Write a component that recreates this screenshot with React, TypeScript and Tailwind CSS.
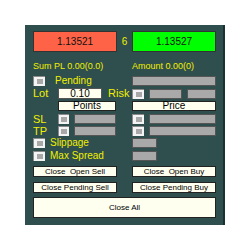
import React from 'react'

const font = "font-['Liberation_Sans',Arial,sans-serif]"

function Check({ w = 'w-[12px]' }: { w?: string }) {
  return (
    <div className={`${w} h-[10px] shrink-0 bg-[#f4f4f4] border-t border-l border-[#8a8a8a] flex items-center justify-center`}>
      <div className="w-[6px] h-[5px] bg-[#a8a8a8]" />
    </div>
  )
}

function Field({ w }: { w: string }) {
  return <div className={`${w} h-[10px] shrink-0 bg-[#a9a9a9] border border-[#555555]`} />
}

function Btn({ label, w, h = 'h-[11px]', size = 'text-[8px]' }: { label: string; w: string; h?: string; size?: string }) {
  return (
    <div className={`${w} ${h} ${size} shrink-0 bg-[#fffff0] border border-[#222222] flex items-center justify-center whitespace-pre text-black leading-none`}>
      {label}
    </div>
  )
}

export default function App() {
  return (
    <div className={`w-[250px] h-[250px] bg-white pt-[25px] pl-[25px] ${font}`}>
      <div className="w-[200px] h-[200px] bg-[#2f4f4f] border-r-2 border-[#1b3030] pl-[8px] pt-[6px] text-[#f0f000]">
        {/* quotes */}
        <div className="flex items-center h-[21px]">
          <div className="w-[84px] h-[21px] bg-[#ff6347] border border-[#333333] flex items-center justify-center text-[10px] text-[#111111]">
            1.13521
          </div>
          <div className="w-[15px] text-center text-[10px]">6</div>
          <div className="w-[84px] h-[21px] bg-[#00ff00] border border-[#333333] flex items-center justify-center text-[10px] text-[#111111]">
            1.13527
          </div>
        </div>

        {/* totals */}
        <div className="flex mt-[9px] h-[10px] items-center text-[9px] leading-none">
          <div className="w-[99px] shrink-0">Sum PL 0.00(0.0)</div>
          <div className="w-[84px]">Amount 0.00(0)</div>
        </div>

        {/* pending */}
        <div className="flex mt-[5px] h-[10px] items-center">
          <div className="w-[99px] shrink-0 flex items-center gap-[10px] text-[10px] leading-none">
            <Check />
            <span>Pending</span>
          </div>
          <Field w="w-[84px]" />
        </div>

        {/* lot / risk */}
        <div className="flex mt-[2px] h-[11px] items-center">
          <div className="w-[99px] shrink-0 flex items-center text-[11px] leading-none">
            <span className="w-[25px]">Lot</span>
            <div className="w-[44px] h-[11px] bg-[#fffff0] border border-[#555555] flex items-center justify-center text-[10px] text-black">
              0.10
            </div>
            <span className="ml-[6px]">Risk</span>
          </div>
          <div className="w-[84px] flex items-center">
            <Check />
            <div className="ml-[5px]"><Field w="w-[33px]" /></div>
            <div className="ml-[5px]"><Field w="w-[29px]" /></div>
          </div>
        </div>

        {/* points / price */}
        <div className="flex mt-[2px] h-[10px] items-center">
          <div className="w-[99px] shrink-0 pl-[25px]">
            <Btn label="Points" w="w-[58px]" h="h-[10px]" size="text-[10px]" />
          </div>
          <Btn label="Price" w="w-[84px]" h="h-[10px]" size="text-[10px]" />
        </div>

        {/* SL */}
        <div className="flex mt-[3px] h-[10px] items-center">
          <div className="w-[99px] shrink-0 flex items-center text-[11px] leading-none">
            <span className="w-[25px]">SL</span>
            <Check w="w-[11px]" />
            <div className="ml-[5px]"><Field w="w-[42px]" /></div>
          </div>
          <div className="w-[84px] flex items-center">
            <Check />
            <div className="ml-[5px]"><Field w="w-[67px]" /></div>
          </div>
        </div>

        {/* TP */}
        <div className="flex mt-[2px] h-[10px] items-center">
          <div className="w-[99px] shrink-0 flex items-center text-[11px] leading-none">
            <span className="w-[25px]">TP</span>
            <Check w="w-[11px]" />
            <div className="ml-[5px]"><Field w="w-[42px]" /></div>
          </div>
          <div className="w-[84px] flex items-center">
            <Check />
            <div className="ml-[5px]"><Field w="w-[67px]" /></div>
          </div>
        </div>

        {/* slippage */}
        <div className="flex mt-[2px] h-[10px] items-center">
          <div className="w-[99px] shrink-0 flex items-center gap-[5px] text-[10px] leading-none">
            <Check />
            <span>Slippage</span>
          </div>
          <Field w="w-[25px]" />
        </div>

        {/* max spread */}
        <div className="flex mt-[3px] h-[10px] items-center">
          <div className="w-[99px] shrink-0 flex items-center gap-[5px] text-[10px] leading-none">
            <Check />
            <span>Max Spread</span>
          </div>
          <Field w="w-[25px]" />
        </div>

        {/* close buttons */}
        <div className="flex mt-[5px] gap-[15px]">
          <Btn label="Close  Open Sell" w="w-[84px]" />
          <Btn label="Close  Open Buy" w="w-[84px]" />
        </div>
        <div className="flex mt-[5px] gap-[15px]">
          <Btn label="Close Pending Sell" w="w-[84px]" />
          <Btn label="Close Pending Buy" w="w-[84px]" />
        </div>
        <div className="mt-[4px]">
          <Btn label="Close All" w="w-[183px]" h="h-[21px]" />
        </div>
      </div>
    </div>
  )
}
